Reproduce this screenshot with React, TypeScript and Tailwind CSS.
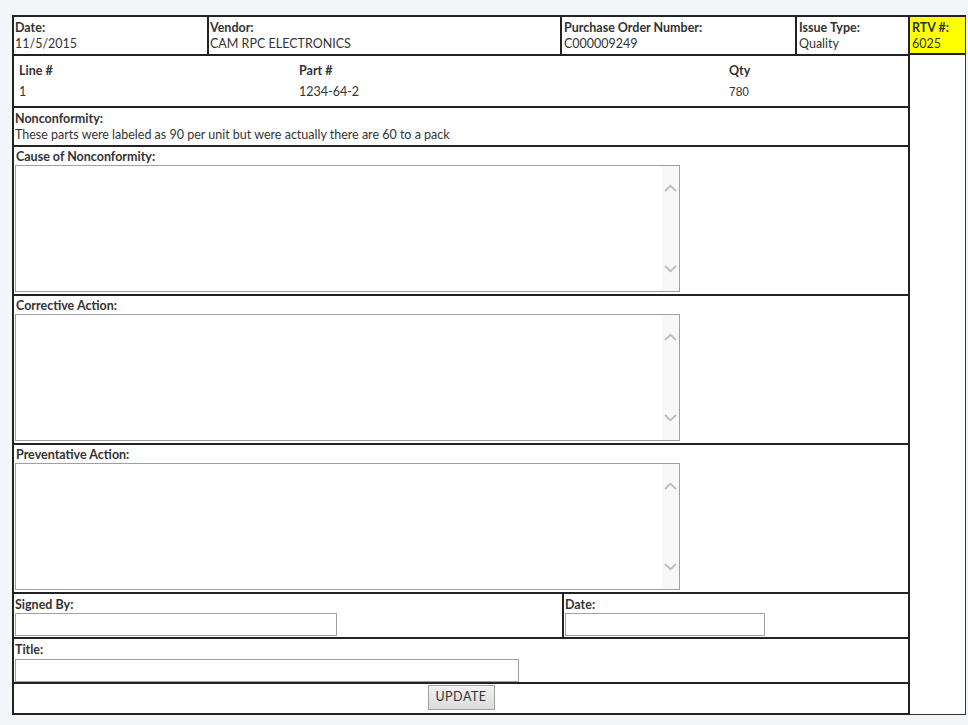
import React from "react";

const font = { fontFamily: "Lato, 'Noto Sans', sans-serif" };

function FakeTextarea() {
  return (
    <div className="flex h-[127px] w-[665px] border border-[#a0a0a0] bg-white">
      <div className="flex-1" />
      <div className="flex w-[17px] flex-col items-center justify-between bg-[#f8f8f8] py-[18px]">
        <svg width="13" height="8" viewBox="0 0 13 8">
          <path d="M1 7 L6.5 1.8 L12 7" fill="none" stroke="#bdbdbd" strokeWidth="1.8" />
        </svg>
        <svg width="13" height="8" viewBox="0 0 13 8">
          <path d="M1 1 L6.5 6.2 L12 1" fill="none" stroke="#bdbdbd" strokeWidth="1.8" />
        </svg>
      </div>
    </div>
  );
}

function TextSection({ label }: { label: string }) {
  return (
    <div className="h-[149px] border-b-2 border-[#222] pl-[1px] pt-[2px]">
      <div className="h-[16px] pl-[1px] text-[12.5px] font-bold leading-[16px]">{label}</div>
      <FakeTextarea />
    </div>
  );
}

export default function App() {
  return (
    <div className="min-h-[725px] bg-[#f3f5f8] pl-[12px] pt-[15px] text-[#333]" style={font}>
      <div className="flex w-[954px] border-t-2 border-[#222]">
        <div className="w-[898px] border-b-2 border-l-2 border-r-2 border-[#222] bg-white">
          {/* header row */}
          <div className="flex h-[39px] border-b-2 border-[#222] text-[12.5px] leading-[16px]">
            <div className="w-[195px] border-r-2 border-[#222] pl-[1px] pt-[3px]">
              <div className="font-bold">Date:</div>
              <div>11/5/2015</div>
            </div>
            <div className="w-[353px] border-r-2 border-[#222] pl-[1px] pt-[3px]">
              <div className="font-bold">Vendor:</div>
              <div>CAM RPC ELECTRONICS</div>
            </div>
            <div className="w-[235px] border-r-2 border-[#222] pl-[2px] pt-[3px]">
              <div className="font-bold">Purchase Order Number:</div>
              <div>C000009249</div>
            </div>
            <div className="flex-1 pl-[2px] pt-[3px]">
              <div className="font-bold">Issue Type:</div>
              <div>Quality</div>
            </div>
          </div>
          {/* line row */}
          <div className="h-[52px] border-b-2 border-[#222] text-[12.5px]">
            <div className="flex h-[24px] items-center pt-[7px] font-bold">
              <div className="w-[285px] pl-[5px]">Line #</div>
              <div className="w-[430px]">Part #</div>
              <div>Qty</div>
            </div>
            <div className="flex h-[21px] items-center pt-[3px]">
              <div className="w-[285px] pl-[5px]">1</div>
              <div className="w-[430px]">1234-64-2</div>
              <div style={{ fontFamily: "'Liberation Sans', Arial, sans-serif" }} className="text-[12px] text-[#333]">780</div>
            </div>
          </div>
          {/* nonconformity */}
          <div className="h-[39px] border-b-2 border-[#222] pl-[1px] pt-[3px] text-[12.5px] leading-[16px]">
            <div className="font-bold">Nonconformity:</div>
            <div>These parts were labeled as 90 per unit but were actually there are 60 to a pack</div>
          </div>
          <TextSection label="Cause of Nonconformity:" />
          <TextSection label="Corrective Action:" />
          <TextSection label="Preventative Action:" />
          {/* signed row */}
          <div className="flex h-[45px] border-b-2 border-[#222] text-[12.5px] leading-[16px]">
            <div className="w-[550px] border-r-2 border-[#222] pl-[1px] pt-[3px]">
              <div className="h-[16px] font-bold">Signed By:</div>
              <div className="h-[23px] w-[322px] border border-[#a0a0a0]" />
            </div>
            <div className="flex-1 pl-[1px] pt-[3px]">
              <div className="h-[16px] font-bold">Date:</div>
              <div className="h-[23px] w-[200px] border border-[#a0a0a0]" />
            </div>
          </div>
          {/* title row */}
          <div className="h-[45px] border-b-2 border-[#222] pl-[1px] pt-[3px] text-[12.5px] leading-[16px]">
            <div className="h-[17px] font-bold">Title:</div>
            <div className="h-[23px] w-[504px] border border-[#a0a0a0]" />
          </div>
          {/* update row */}
          <div className="flex h-[29px] items-start justify-center pt-[1px]">
            <div className="flex h-[25px] w-[67px] items-center justify-center border border-[#a0a0a0] bg-gradient-to-b from-[#f2f2f2] to-[#dcdcdc] text-[12.5px] tracking-[0.5px] text-[#333]">
              UPDATE
            </div>
          </div>
        </div>
        <div className="w-[56px] border-b border-r border-[#333] bg-white">
          <div className="h-[38px] border-b-2 border-[#222] bg-[#ffff00] pl-[2px] pt-[3px] text-[12.5px] leading-[16px]">
            <div className="font-bold">RTV #:</div>
            <div>6025</div>
          </div>
        </div>
      </div>
    </div>
  );
}
